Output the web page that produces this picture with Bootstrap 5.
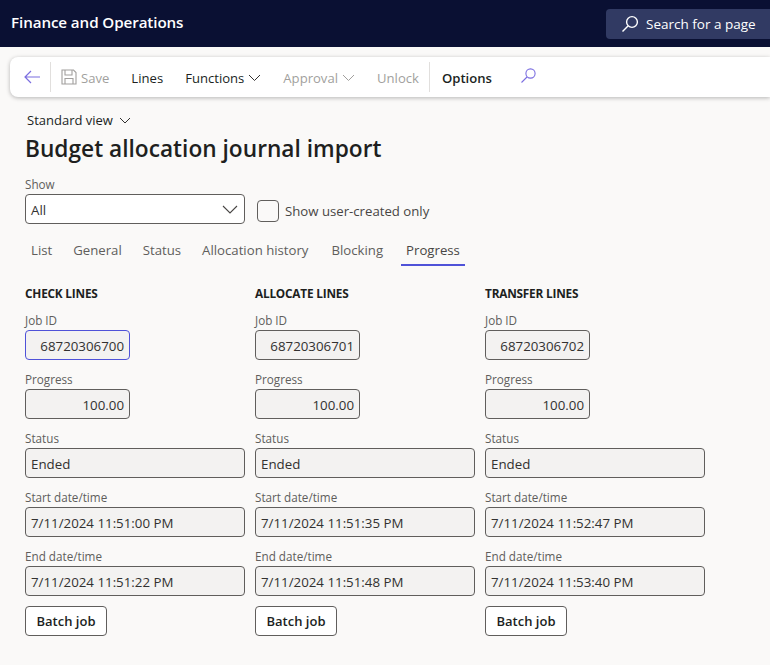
<!DOCTYPE html>
<html lang="en"><head><meta charset="utf-8"><title>Budget allocation journal import</title>
<link href="https://cdn.jsdelivr.net/npm/bootstrap@5.3.0/dist/css/bootstrap.min.css" rel="stylesheet">
<style>
html,body{height:100%;overflow:hidden}
body{background:#faf9f8;color:#201f1e;font-family:"Open Sans","Noto Sans",sans-serif;font-size:13.5px;width:770px;height:665px}
.fo-head{height:47px;background:#0a1033;color:#fff;padding-left:11px}
.fo-brand{font-size:15.2px;font-weight:600;letter-spacing:-.1px;position:relative;top:-1px}
.fo-search{width:164px;height:30px;margin-top:1px;background:#313a63;border-radius:4px 0 0 4px;padding-left:15px;gap:7px;font-size:13.5px}
.fo-bar{height:40px;margin:10px 0 0 10px;background:#fff;border-radius:8px 0 0 8px;box-shadow:0 1px 4px rgba(0,0,0,.28)}
.fo-act{font-size:13.1px;white-space:nowrap;line-height:20px;padding-top:2px}
.fo-off{color:#a19f9d}
.fo-sep{width:1px;height:30px;background:#e1dfdd}
.fo-back{margin-left:14px;margin-right:10px}
.fo-save{margin-left:10px}
.fo-gap{margin-left:22px}
.fo-opt{margin-left:12px;font-weight:600}
.fo-glass{margin-left:29px;margin-top:-3px}
.fo-sep2{margin-left:10px}
.fo-page{padding:0 0 0 25px}
.fo-view{font-size:13px;margin:14px 0 0 2px;line-height:18px;gap:6px}
.fo-title{font-size:22.7px;font-weight:600;line-height:32px;margin:4px 0 0}
.fo-lbl{font-size:11.7px;color:#605e5c;line-height:12px;margin-bottom:4px;display:block}
.fo-show{margin-top:13px}
.fo-ctl{height:30px;border:1px solid #605e5c;border-radius:4px;background:#f3f2f1;padding:1px 5px 0;font-size:13.3px;line-height:28px;color:#323130;white-space:nowrap}
.fo-sel{width:220px;background:#fff;padding:0 6px 0 5px}
.fo-sel span{position:relative;top:1px}
.fo-chk{width:22px;height:22px;border:1px solid #605e5c;border-radius:4px}
.fo-chkrow{margin:35px 0 0 12px;gap:6px;font-size:13.2px;color:#484644;line-height:22px}
.fo-tabs{margin:12px 0 0 1px;height:30px}
.fo-tab{padding:1px 5px 0;margin-right:11px;font-size:13.2px;color:#605e5c;line-height:26px;height:30px;border-bottom:2px solid transparent;white-space:nowrap}
.fo-tab-wide{margin-right:13px}
.fo-tab.fo-on{color:#484644;border-bottom-color:#4f52d8}
.fo-cols{margin-top:20px;gap:10px}
.fo-col{width:220px}
.fo-h{font-size:11.8px;font-weight:700;line-height:14px;margin-bottom:14px;color:#201f1e;letter-spacing:-.2px}
.fo-field{margin-bottom:13px}
.fo-short{width:105px;text-align:right}
.fo-focus{border-color:#4f52d8}
.fo-btn{width:82px;height:30px;border:1px solid #605e5c;border-radius:4px;background:#fff;color:#201f1e;font-size:13px;font-weight:600;padding:1px 0 0;margin-top:-3px;display:block}
</style></head><body>
<header class="fo-head d-flex justify-content-between align-items-center">
<span class="fo-brand">Finance and Operations</span>
<div class="fo-search d-flex align-items-center text-white">
<svg width="18" height="18" viewBox="0 0 18 18" fill="none" stroke="#fff" stroke-width="1.4"><circle cx="11" cy="7" r="5.4"/><path d="M7 11 1.500 16.500"/></svg>
<span>Search for a page</span></div>
</header>
<nav class="fo-bar d-flex align-items-center">
<svg class="fo-back" width="16" height="14" viewBox="0 0 16 14" fill="none" stroke="#7b6ee0" stroke-width="1.2"><path d="M7 1 1 7l6 6M1 7h15"/></svg>
<span class="fo-sep"></span>
<svg class="fo-save" width="16" height="16" viewBox="0 0 16 16" fill="none" stroke="#a19f9d" stroke-width="1.1"><path d="M1 1h11.500L15 3.500V15H1zM4 1v5h7V1M4 15V9.500h8V15"/></svg>
<span class="fo-act fo-off ms-1">Save</span>
<span class="fo-act fo-gap">Lines</span>
<span class="fo-act fo-gap d-flex align-items-center">Functions<svg class="ms-1" width="13" height="8" viewBox="0 0 13 8" fill="none" stroke="#323130"><path d="m1 1 5.500 5.500L12 1"/></svg></span>
<span class="fo-act fo-off fo-gap d-flex align-items-center">Approval<svg class="ms-1" width="13" height="8" viewBox="0 0 13 8" fill="none" stroke="#a19f9d"><path d="m1 1 5.500 5.500L12 1"/></svg></span>
<span class="fo-act fo-off fo-gap">Unlock</span>
<span class="fo-sep fo-sep2"></span>
<span class="fo-act fo-opt">Options</span>
<svg class="fo-glass" width="15" height="15" viewBox="0 0 15 15" fill="none" stroke="#7b6ee0" stroke-width="1.1"><circle cx="9.500" cy="5.500" r="4.600"/><path d="M6 9 .5 14.500"/></svg>
</nav>
<main class="fo-page">
<div class="fo-view d-flex align-items-center">Standard view<svg width="12" height="7" viewBox="0 0 12 7" fill="none" stroke="#323130"><path d="m1 1 5 5 5-5"/></svg></div>
<h1 class="fo-title">Budget allocation journal import</h1>
<div class="d-flex">
<div class="fo-show"><label class="fo-lbl">Show</label>
<div class="fo-ctl fo-sel d-flex justify-content-between align-items-center"><span>All</span><svg width="16" height="9" viewBox="0 0 16 9" fill="none" stroke="#484644" stroke-width="1.1"><path d="m1 1 7 7 7-7"/></svg></div></div>
<div class="fo-chkrow d-flex"><span class="fo-chk"></span><span>Show user-created only</span></div>
</div>
<div class="fo-tabs d-flex">
<span class="fo-tab">List</span><span class="fo-tab">General</span><span class="fo-tab">Status</span><span class="fo-tab fo-tab-wide">Allocation history</span><span class="fo-tab fo-tab-wide">Blocking</span><span class="fo-tab fo-on">Progress</span>
</div>
<div class="fo-cols d-flex">
<section class="fo-col"><div class="fo-h">CHECK LINES</div>
<div class="fo-field"><label class="fo-lbl">Job ID</label><div class="fo-ctl fo-short fo-focus">68720306700</div></div>
<div class="fo-field"><label class="fo-lbl">Progress</label><div class="fo-ctl fo-short">100.00</div></div>
<div class="fo-field"><label class="fo-lbl">Status</label><div class="fo-ctl">Ended</div></div>
<div class="fo-field"><label class="fo-lbl">Start date/time</label><div class="fo-ctl">7/11/2024 11:51:00 PM</div></div>
<div class="fo-field"><label class="fo-lbl">End date/time</label><div class="fo-ctl">7/11/2024 11:51:22 PM</div></div>
<button class="fo-btn">Batch job</button></section>
<section class="fo-col"><div class="fo-h">ALLOCATE LINES</div>
<div class="fo-field"><label class="fo-lbl">Job ID</label><div class="fo-ctl fo-short">68720306701</div></div>
<div class="fo-field"><label class="fo-lbl">Progress</label><div class="fo-ctl fo-short">100.00</div></div>
<div class="fo-field"><label class="fo-lbl">Status</label><div class="fo-ctl">Ended</div></div>
<div class="fo-field"><label class="fo-lbl">Start date/time</label><div class="fo-ctl">7/11/2024 11:51:35 PM</div></div>
<div class="fo-field"><label class="fo-lbl">End date/time</label><div class="fo-ctl">7/11/2024 11:51:48 PM</div></div>
<button class="fo-btn">Batch job</button></section>
<section class="fo-col"><div class="fo-h">TRANSFER LINES</div>
<div class="fo-field"><label class="fo-lbl">Job ID</label><div class="fo-ctl fo-short">68720306702</div></div>
<div class="fo-field"><label class="fo-lbl">Progress</label><div class="fo-ctl fo-short">100.00</div></div>
<div class="fo-field"><label class="fo-lbl">Status</label><div class="fo-ctl">Ended</div></div>
<div class="fo-field"><label class="fo-lbl">Start date/time</label><div class="fo-ctl">7/11/2024 11:52:47 PM</div></div>
<div class="fo-field"><label class="fo-lbl">End date/time</label><div class="fo-ctl">7/11/2024 11:53:40 PM</div></div>
<button class="fo-btn">Batch job</button></section>
</div>
</main>
<script src="https://cdn.jsdelivr.net/npm/bootstrap@5.3.0/dist/js/bootstrap.bundle.min.js"></script>
</body></html>
